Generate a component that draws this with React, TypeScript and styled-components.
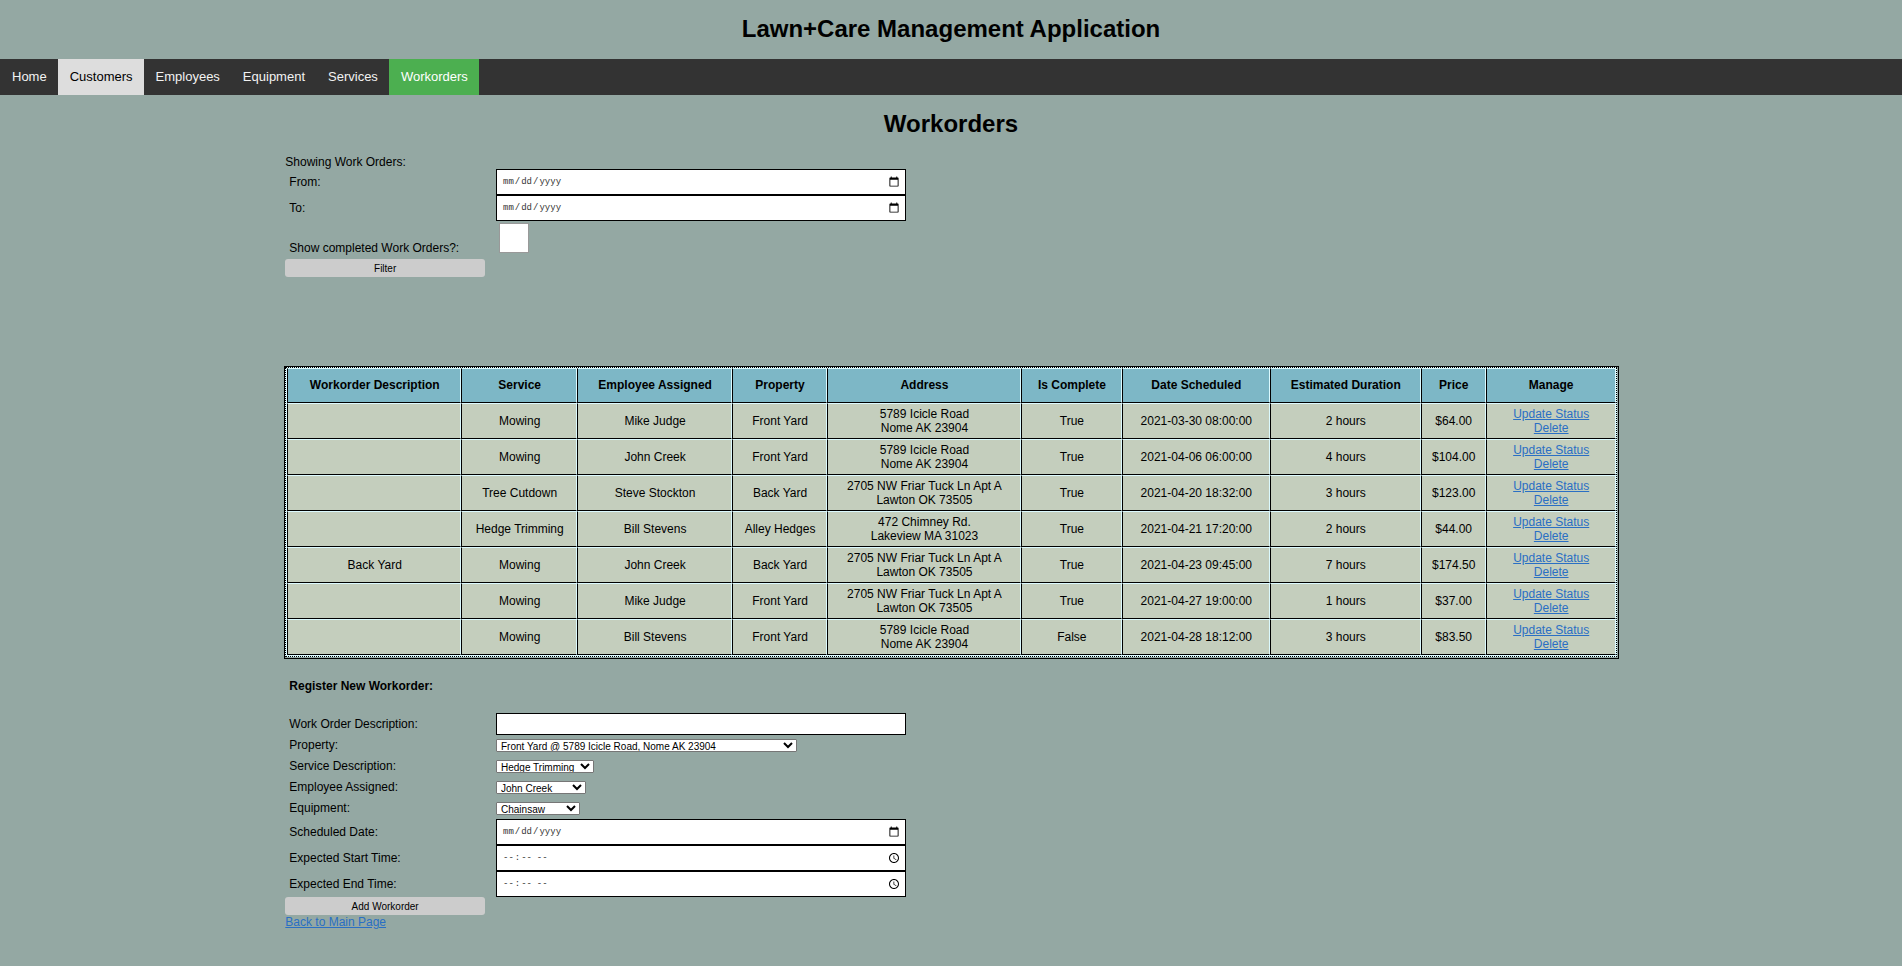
import React from "react";
import styled, { createGlobalStyle, css } from "styled-components";

const Global = createGlobalStyle`
  body {
    margin: 0;
    background: #94a8a3;
    color: #000;
    font: 12px/14px "Liberation Sans", Arial, sans-serif;
  }
`;

const Heading = styled.h1`
  margin: 0;
  padding: 15px 0 16px;
  text-align: center;
  font-size: 24px;
  line-height: 28px;
`;

const Nav = styled.nav`
  display: flex;
  background: #333;
`;

const NavLink = styled.a<{ $state?: "hover" | "active" }>`
  padding: 10px 11px 10px 12px;
  font-size: 13px;
  line-height: 16px;
  text-decoration: none;
  color: #f2f2f2;
  ${({ $state }) => $state === "hover" && css`background: #ddd; color: #000;`}
  ${({ $state }) => $state === "active" && css`background: #4caf50; color: #fff;`}
`;

const Main = styled.main`
  margin: 0 15%;
  padding-top: 1px;
`;

const Filters = styled.form`
  margin: 0 0 89px;
`;

const FieldRow = styled.div<{ $height: number; $end?: boolean }>`
  display: grid;
  grid-template-columns: calc(15% + 11px) calc(30% + 11px);
  align-items: ${({ $end }) => ($end ? "end" : "center")};
  min-height: ${({ $height }) => $height}px;
`;

const Label = styled.label`
  padding: 0 0 1px 4px;
`;

const TextField = styled.input`
  box-sizing: border-box;
  width: 100%;
  height: 22px;
  padding: 1px 5px;
  border: 1px solid #000;
  border-radius: 0;
  background: #fff;
  font: 10px "Liberation Sans", Arial, sans-serif;
`;

const PickerField = styled(TextField)`
  height: 26px;
  color: #333;
  font: 9px "Liberation Mono", monospace;
  &::-webkit-calendar-picker-indicator {
    width: 12px;
    height: 12px;
    padding: 0;
  }
`;

const Check = styled.input`
  appearance: none;
  box-sizing: border-box;
  width: 30px;
  height: 30px;
  margin: 2px 3px 3px;
  border: 1px solid #999;
  background: #fff;
  &:checked {
    background: #4caf50;
  }
`;

const Submit = styled.button<{ $top?: number }>`
  display: block;
  width: 15%;
  height: 18px;
  margin: ${({ $top = 0 }) => $top}px 0 0;
  padding: 0;
  border: 0;
  border-radius: 3px;
  background: #ccc;
  color: #000;
  font: 10px "Liberation Sans", Arial, sans-serif;
`;

const Select = styled.select<{ $width: number }>`
  width: ${({ $width }) => $width}px;
  height: 13px;
  padding: 0;
  border: 1px solid #767676;
  border-radius: 1px;
  background: #fff;
  color: #000;
  font: 10px "Liberation Sans", Arial, sans-serif;
`;

const TableFrame = styled.div`
  margin: 0 -2px 0 -1px;
  padding: 0 1px 1px 0;
  border: 1px solid #000;
`;

const Table = styled.table`
  box-sizing: border-box;
  width: 100%;
  padding: 0 0 1px 1px;
  border: 1px dotted #000;
  border-spacing: 0;
  background: #dcfaff;
  text-align: center;
`;

const cell = css`
  box-sizing: border-box;
  padding: 0 0 1px 1px;
  border: 1px solid;
  border-color: #dcfaff #dcfaff #000 #000;
  background-clip: padding-box;
`;

const Th = styled.th<{ $width: number }>`
  ${cell}
  width: ${({ $width }) => $width}px;
  height: 35px;
  background-color: #7db7c6;
`;

const Td = styled.td`
  ${cell}
  height: 36px;
  background-color: #c4cebd;
`;

const Link = styled.a`
  color: #2a6fc4;
`;

const Subheading = styled.h2`
  margin: 20px 0;
  padding-left: 4px;
  font-size: 12px;
  line-height: 14px;
`;

const columns: [string, number][] = [
  ["Workorder Description", 174], ["Service", 116], ["Employee Assigned", 155], ["Property", 95],
  ["Address", 194], ["Is Complete", 101], ["Date Scheduled", 148], ["Estimated Duration", 151],
  ["Price", 65], ["Manage", 130],
];

const icicle = ["5789 Icicle Road", "Nome AK 23904"];
const friar = ["2705 NW Friar Tuck Ln Apt A", "Lawton OK 73505"];
const chimney = ["472 Chimney Rd.", "Lakeview MA 31023"];

const orders = [
  { note: "", service: "Mowing", who: "Mike Judge", place: "Front Yard", address: icicle, done: "True", date: "2021-03-30 08:00:00", time: "2 hours", price: "$64.00" },
  { note: "", service: "Mowing", who: "John Creek", place: "Front Yard", address: icicle, done: "True", date: "2021-04-06 06:00:00", time: "4 hours", price: "$104.00" },
  { note: "", service: "Tree Cutdown", who: "Steve Stockton", place: "Back Yard", address: friar, done: "True", date: "2021-04-20 18:32:00", time: "3 hours", price: "$123.00" },
  { note: "", service: "Hedge Trimming", who: "Bill Stevens", place: "Alley Hedges", address: chimney, done: "True", date: "2021-04-21 17:20:00", time: "2 hours", price: "$44.00" },
  { note: "Back Yard", service: "Mowing", who: "John Creek", place: "Back Yard", address: friar, done: "True", date: "2021-04-23 09:45:00", time: "7 hours", price: "$174.50" },
  { note: "", service: "Mowing", who: "Mike Judge", place: "Front Yard", address: friar, done: "True", date: "2021-04-27 19:00:00", time: "1 hours", price: "$37.00" },
  { note: "", service: "Mowing", who: "Bill Stevens", place: "Front Yard", address: icicle, done: "False", date: "2021-04-28 18:12:00", time: "3 hours", price: "$83.50" },
];

const pages = ["Home", "Customers", "Employees", "Equipment", "Services", "Workorders"];
const states: Record<string, "hover" | "active"> = { Customers: "hover", Workorders: "active" };

const choices: [string, string, string, number][] = [
  ["property", "Property:", "Front Yard @ 5789 Icicle Road, Nome AK 23904", 301],
  ["service", "Service Description:", "Hedge Trimming", 98],
  ["employee", "Employee Assigned:", "John Creek", 90],
  ["equipment", "Equipment:", "Chainsaw", 84],
];

const Picker = ({ id, label, type }: { id: string; label: string; type: string }) => (
  <FieldRow $height={26}>
    <Label htmlFor={id}>{label}</Label>
    <PickerField id={id} type={type} />
  </FieldRow>
);

export default function App() {
  return (
    <>
      <Global />
      <Heading>Lawn+Care Management Application</Heading>
      <Nav>
        {pages.map((p) => (
          <NavLink key={p} href="#" $state={states[p]}>{p}</NavLink>
        ))}
      </Nav>
      <Heading>Workorders</Heading>
      <Main>
        <Filters>
          <div>Showing Work Orders:</div>
          <Picker id="from" label="From:" type="date" />
          <Picker id="to" label="To:" type="date" />
          <FieldRow $height={35} $end>
            <Label htmlFor="completed">Show completed Work Orders?:</Label>
            <Check id="completed" type="checkbox" />
          </FieldRow>
          <Submit type="button" $top={3}>Filter</Submit>
        </Filters>
        <TableFrame>
          <Table>
            <thead>
              <tr>{columns.map(([c, w]) => <Th key={c} $width={w}>{c}</Th>)}</tr>
            </thead>
            <tbody>
              {orders.map((o) => (
                <tr key={o.date}>
                  <Td>{o.note}</Td>
                  <Td>{o.service}</Td>
                  <Td>{o.who}</Td>
                  <Td>{o.place}</Td>
                  <Td>{o.address[0]}<br />{o.address[1]}</Td>
                  <Td>{o.done}</Td>
                  <Td>{o.date}</Td>
                  <Td>{o.time}</Td>
                  <Td>{o.price}</Td>
                  <Td><Link href="#">Update Status</Link><br /><Link href="#">Delete</Link></Td>
                </tr>
              ))}
            </tbody>
          </Table>
        </TableFrame>
        <form>
          <Subheading>Register New Workorder:</Subheading>
          <FieldRow $height={22}>
            <Label htmlFor="description">Work Order Description:</Label>
            <TextField id="description" type="text" />
          </FieldRow>
          {choices.map(([id, label, value, width]) => (
            <FieldRow key={id} $height={21}>
              <Label htmlFor={id}>{label}</Label>
              <Select id={id} $width={width}><option>{value}</option></Select>
            </FieldRow>
          ))}
          <Picker id="date" label="Scheduled Date:" type="date" />
          <Picker id="start" label="Expected Start Time:" type="time" />
          <Picker id="end" label="Expected End Time:" type="time" />
          <Submit type="button">Add Workorder</Submit>
        </form>
        <Link href="#">Back to Main Page</Link>
      </Main>
    </>
  );
}
